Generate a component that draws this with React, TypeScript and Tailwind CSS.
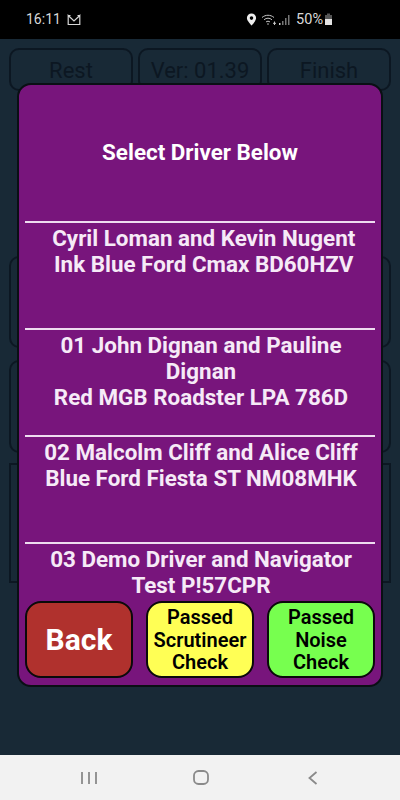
const drivers = [
  ['\u00a0Cyril Loman and Kevin Nugent', '\u00a0Ink Blue Ford Cmax BD60HZV'],
  ['01 John Dignan and Pauline Dignan', 'Red MGB Roadster LPA 786D'],
  ['02 Malcolm Cliff and Alice Cliff', 'Blue Ford Fiesta ST NM08MHK'],
  ['03 Demo Driver and Navigator', 'Test P!57CPR'],
]

function StatusBar() {
  return (
    <div className="h-[39px] bg-black flex items-center justify-between pl-[26px] pr-[67px] text-[#d8d8d8] text-[14px] shrink-0">
      <div className="flex items-center gap-[6px]">
        <span>16:11</span>
        <svg width="14" height="12" viewBox="0 0 14 12" fill="none" stroke="#d8d8d8" strokeWidth="1.2">
          <path d="M1.2 10.5V1.5L7 7L12.8 1.5V10.5Z" />
          <path d="M1 1.5H3.5M10.5 1.5H13" />
        </svg>
      </div>
      <div className="flex items-center">
        <svg width="11" height="13" viewBox="0 0 11 13" fill="#eeeeee" className="mr-[4px]">
          <path fillRule="evenodd" d="M5.5 0.5A4.6 4.6 0 0 0 .9 5.1C.9 8 5.5 12.5 5.5 12.5S10.1 8 10.1 5.1A4.6 4.6 0 0 0 5.5 .5ZM5.5 3.3A1.8 1.8 0 1 1 5.5 6.9A1.8 1.8 0 0 1 5.5 3.3Z" />
        </svg>
        <svg width="16" height="12" viewBox="0 0 16 12" fill="none" stroke="#c8c8c8" strokeWidth="1" className="mr-[1px]">
          <path d="M1 3.5C4.5 .5 9.5 .5 13 3.5" />
          <path d="M3 5.8C5.5 3.7 8.5 3.7 11 5.8" />
          <path d="M5 8C6.2 7 7.8 7 9 8" />
          <circle cx="7" cy="10" r="0.8" fill="#c8c8c8" stroke="none" />
          <path d="M13.5 7.5V11M12 9.3H15" />
        </svg>
        <svg width="13" height="12" viewBox="0 0 13 12" fill="#777777" className="mr-[5px]">
          <rect x="1" y="9" width="1.5" height="2" fill="#cccccc" />
          <rect x="4" y="7" width="1.5" height="4" />
          <rect x="7" y="4" width="1.5" height="7" />
          <rect x="10" y="1" width="1.5" height="10" />
        </svg>
        <span className="text-[14.5px]">50%</span>
        <svg width="9" height="13" viewBox="0 0 9 13" className="ml-[1px]">
          <path d="M3 .5H6V2H8V12H1V2H3Z" fill="#555555" />
          <rect x="1" y="6" width="7" height="6" fill="#e4e4e4" />
        </svg>
      </div>
    </div>
  )
}

function BehindButton({ label }: { label: string }) {
  return (
    <div className="h-[43px] flex-1 rounded-[10px] border-2 border-[#0c1722] flex items-start justify-center pt-[8px] text-[22px] leading-[26px] text-[#0c1722]">
      {label}
    </div>
  )
}

function ActionButton({ className, children }: { className: string; children: React.ReactNode }) {
  return (
    <div className={`w-[108px] h-[77px] rounded-[16px] border-2 border-[#0a0a0a] flex items-center justify-center text-center ${className}`}>
      {children}
    </div>
  )
}

export default function App() {
  return (
    <div className="relative w-[400px] h-[800px] overflow-hidden flex flex-col bg-[#182936] font-['Roboto',sans-serif]">
      <StatusBar />

      {/* screen behind the dialog */}
      <div className="flex-1 px-[9px] pt-[9px]">
        <div className="flex gap-[5px]">
          <BehindButton label="Rest" />
          <BehindButton label="Ver: 01.39" />
          <BehindButton label="Finish" />
        </div>
        <div className="mt-[165px] h-[92px] rounded-[10px] border-2 border-[#0c1722]" />
        <div className="mt-[12px] h-[93px] rounded-[10px] border-2 border-[#0c1722]" />
        <div className="mt-[10px] h-[120px] border-2 border-[#0c1722]" />
      </div>

      {/* dialog */}
      <div className="absolute left-[17px] top-[83px] w-[366px] h-[604px] rounded-[14px] border-2 border-[#0a0f14] bg-[#78157c] flex flex-col overflow-hidden">
        <div className="h-[136px] shrink-0 flex items-center justify-center text-white text-[22.4px] font-bold">
          Select Driver Below
        </div>
        <div className="h-[380px] shrink-0 overflow-hidden px-[6px]">
          {drivers.map(([name, car]) => (
            <div key={name} className="h-[107px] border-t-2 border-[#eedcf0] pt-[2px] pl-[16px] pr-[14px] text-center text-[22.4px] leading-[26px] font-bold text-[#f6eaf7]">
              <div>{name}</div>
              <div>{car}</div>
            </div>
          ))}
        </div>
        <div className="flex justify-between px-[6px]">
          <ActionButton className="bg-[#b0312d] text-white text-[30px] font-bold">Back</ActionButton>
          <ActionButton className="bg-[#ffff55] text-black text-[20px] leading-[22.5px] font-semibold pt-[1px]">
            <span>Passed<br />Scrutineer<br />Check</span>
          </ActionButton>
          <ActionButton className="bg-[#77ff4f] text-black text-[20px] leading-[22.5px] font-semibold pt-[1px]">
            <span>Passed<br />Noise<br />Check</span>
          </ActionButton>
        </div>
      </div>

      {/* android nav bar */}
      <div className="h-[45px] bg-[#f2f2f2] flex items-center shrink-0 pl-[81px]">
        <svg width="16" height="14" viewBox="0 0 16 14" stroke="#8a8a8a" strokeWidth="1.8">
          <path d="M1 1V13M8 1V13M15 1V13" />
        </svg>
        <svg width="16" height="15" viewBox="0 0 16 15" fill="none" stroke="#8a8a8a" strokeWidth="1.8" className="ml-[96px]">
          <rect x="1" y="1" width="14" height="13" rx="4.5" />
        </svg>
        <svg width="10" height="14" viewBox="0 0 10 14" fill="none" stroke="#8a8a8a" strokeWidth="1.8" className="ml-[99px]">
          <path d="M8.5 1L1.5 7L8.5 13" />
        </svg>
      </div>
    </div>
  )
}
